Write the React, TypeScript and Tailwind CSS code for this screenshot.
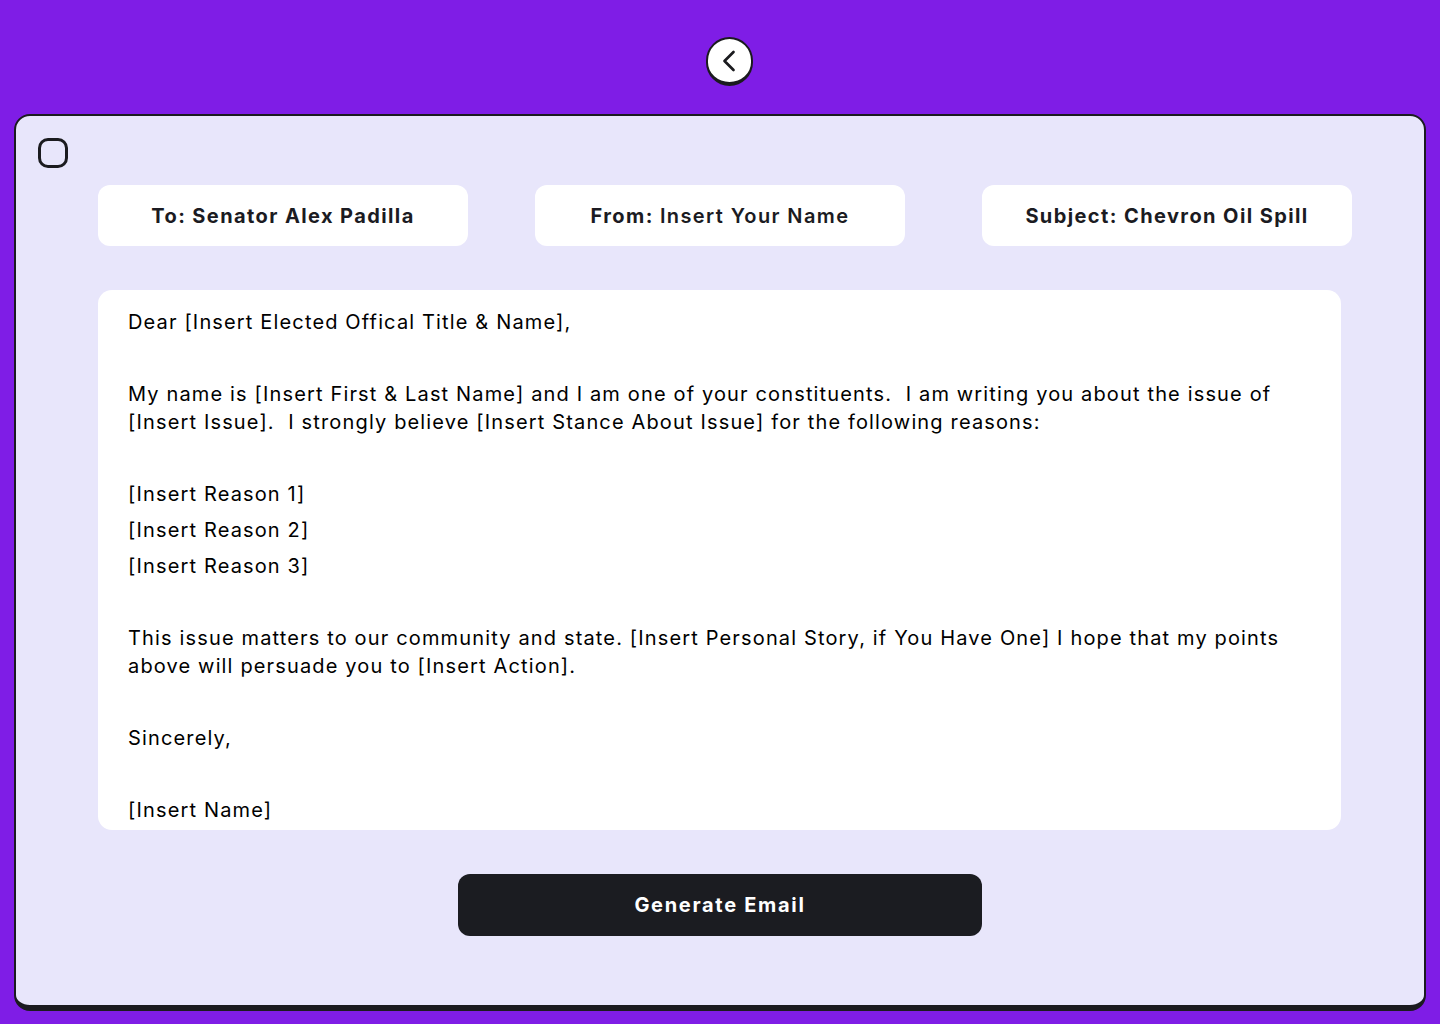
import React from "react";

const font = { fontFamily: "Inter, 'Noto Sans', sans-serif" };

export default function App() {
  const lines: string[][] = [
    ["Dear [Insert Elected Offical Title & Name],"],
    [""],
    [
      "My name is [Insert First & Last Name] and I am one of your constituents.  I am writing you about the issue of",
      "[Insert Issue].  I strongly believe [Insert Stance About Issue] for the following reasons:",
    ],
    [""],
    ["[Insert Reason 1]"],
    ["[Insert Reason 2]"],
    ["[Insert Reason 3]"],
    [""],
    [
      "This issue matters to our community and state. [Insert Personal Story, if You Have One] I hope that my points",
      "above will persuade you to [Insert Action].",
    ],
    [""],
    ["Sincerely,"],
    [""],
    ["[Insert Name]"],
  ];
  return (
    <div className="min-h-[1024px] w-full bg-[#7f1de6] flex flex-col" style={font}>
      <div className="h-[114px] flex items-start justify-center pt-[37px] pl-[18px]">
        <button className="w-[47px] h-[49px] rounded-full bg-white border-2 border-b-[4px] border-[#1b1b1f] flex items-center justify-center">
          <svg width="36" height="36" viewBox="0 0 24 24" fill="none" stroke="#1b1b1f" strokeWidth="1.8" strokeLinecap="round" strokeLinejoin="round">
            <path d="m15 18-6-6 6-6" />
          </svg>
        </button>
      </div>
      <div className="mx-[14px] h-[897px] rounded-[16px] bg-[#e8e6fb] border-2 border-b-[6px] border-[#1b1b1f] flex flex-col">
        <div className="ml-[22px] mt-[22px] w-[30px] h-[30px] rounded-[10px] border-[3px] border-[#1b1b1f]" />
        <div className="flex mt-[17px] pl-[82px]">
          <div className="w-[370px] h-[61px] rounded-[12px] bg-white flex items-center justify-center text-[20px] font-bold text-[#1b1b22] tracking-[1.4px]">
            To: Senator Alex Padilla
          </div>
          <div className="ml-[67px] w-[370px] h-[61px] rounded-[12px] bg-white flex items-center justify-center text-[20px] font-bold text-[#1b1b22] tracking-[1.4px]">
            From:&nbsp;<span className="font-semibold">Insert Your Name</span>
          </div>
          <div className="ml-[77px] w-[370px] h-[61px] rounded-[12px] bg-white flex items-center justify-center text-[20px] font-bold text-[#1b1b22] tracking-[1.4px]">
            Subject: Chevron Oil Spill
          </div>
        </div>
        <div className="ml-[82px] mt-[44px] w-[1243px] h-[540px] rounded-[14px] bg-white pl-[30px] pt-[18px] overflow-hidden text-[20px] text-black leading-[28px] whitespace-pre tracking-[1.15px]">
          {lines.map((p, i) => (
            <p key={i} className="mb-[8px] min-h-[28px]">
              {p.map((l, j) => (
                <React.Fragment key={j}>
                  {j > 0 && <br />}
                  {l}
                </React.Fragment>
              ))}
            </p>
          ))}
        </div>
        <button className="mx-auto mt-[44px] w-[524px] h-[62px] rounded-[12px] bg-[#1b1c21] text-white text-[20px] font-bold tracking-[1.7px]">
          Generate Email
        </button>
      </div>
    </div>
  );
}
